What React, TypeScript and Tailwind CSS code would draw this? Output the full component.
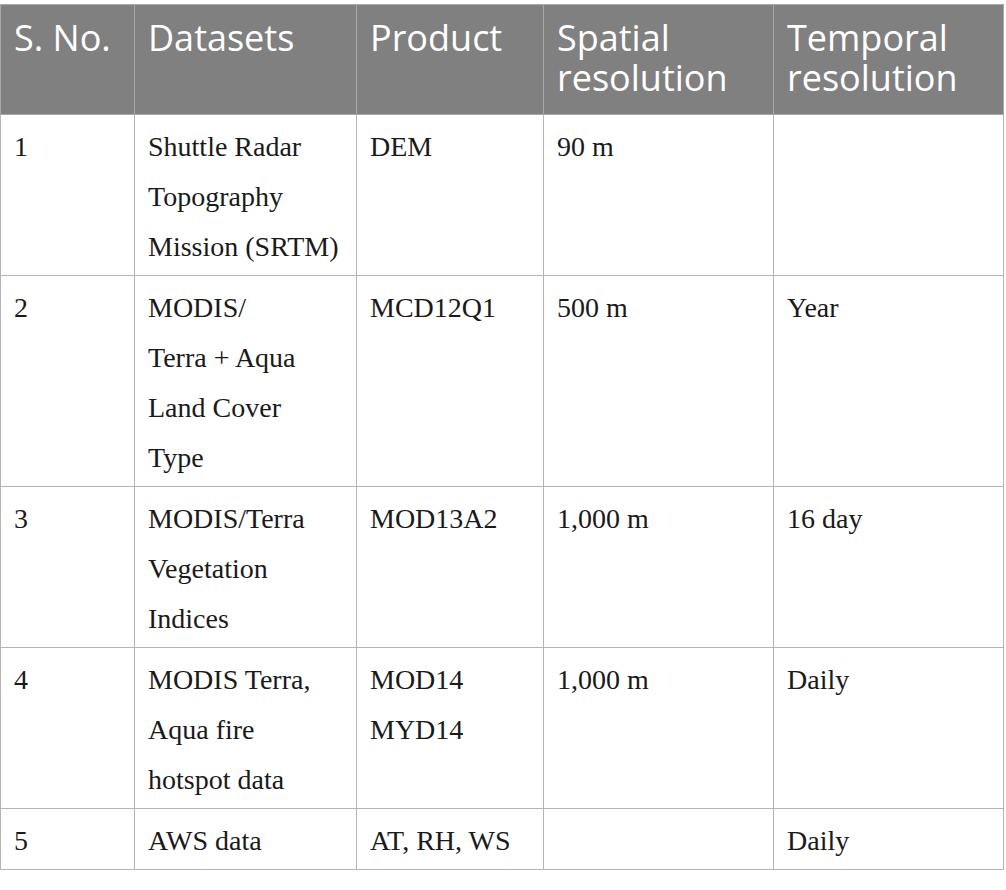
const rows: { no: string; dataset: string[]; product: string[]; spatial: string; temporal: string }[] = [
  {
    no: '1',
    dataset: ['Shuttle Radar', 'Topography', 'Mission (SRTM)'],
    product: ['DEM'],
    spatial: '90 m',
    temporal: '',
  },
  {
    no: '2',
    dataset: ['MODIS/', 'Terra + Aqua', 'Land Cover', 'Type'],
    product: ['MCD12Q1'],
    spatial: '500 m',
    temporal: 'Year',
  },
  {
    no: '3',
    dataset: ['MODIS/Terra', 'Vegetation', 'Indices'],
    product: ['MOD13A2'],
    spatial: '1,000 m',
    temporal: '16 day',
  },
  {
    no: '4',
    dataset: ['MODIS Terra,', 'Aqua fire', 'hotspot data'],
    product: ['MOD14', 'MYD14'],
    spatial: '1,000 m',
    temporal: 'Daily',
  },
  {
    no: '5',
    dataset: ['AWS data'],
    product: ['AT, RH, WS'],
    spatial: '',
    temporal: 'Daily',
  },
];

const headers: string[][] = [
  ['S. No.'],
  ['Datasets'],
  ['Product'],
  ['Spatial', 'resolution'],
  ['Temporal', 'resolution'],
];

function Lines({ lines }: { lines: string[] }) {
  return (
    <>
      {lines.map((l, i) => (
        <div key={i} className="whitespace-nowrap">
          {l}
        </div>
      ))}
    </>
  );
}

export default function App() {
  return (
    <div className="min-h-[890px] w-[1006px] bg-white pt-[4px]">
      <table className="w-[1003px] table-fixed border-collapse border border-[#b4b4b4]">
        <colgroup>
          <col className="w-[134px]" />
          <col className="w-[222px]" />
          <col className="w-[187px]" />
          <col className="w-[230px]" />
          <col className="w-[230px]" />
        </colgroup>
        {/* Header */}
        <thead>
          <tr className="bg-[#808080]">
            {headers.map((h, i) => (
              <th
                key={i}
                className="h-[110px] border border-[#a9a9a9] px-[13px] pt-[13px] pb-[16px] text-left align-top font-['Open_Sans',sans-serif] text-[36px] leading-[40px] font-normal text-white"
              >
                <Lines lines={h} />
              </th>
            ))}
          </tr>
        </thead>
        <tbody>
          {rows.map((r) => (
            <tr key={r.no}>
              {[[r.no], r.dataset, r.product, [r.spatial], [r.temporal]].map((cell, i) => (
                <td
                  key={i}
                  className="border border-[#b4b4b4] px-[13px] pt-[7px] pb-[3px] align-top font-['Liberation_Serif',serif] text-[28px] leading-[50px] text-[#1a1a1a]"
                >
                  <Lines lines={cell} />
                </td>
              ))}
            </tr>
          ))}
        </tbody>
      </table>
    </div>
  );
}
